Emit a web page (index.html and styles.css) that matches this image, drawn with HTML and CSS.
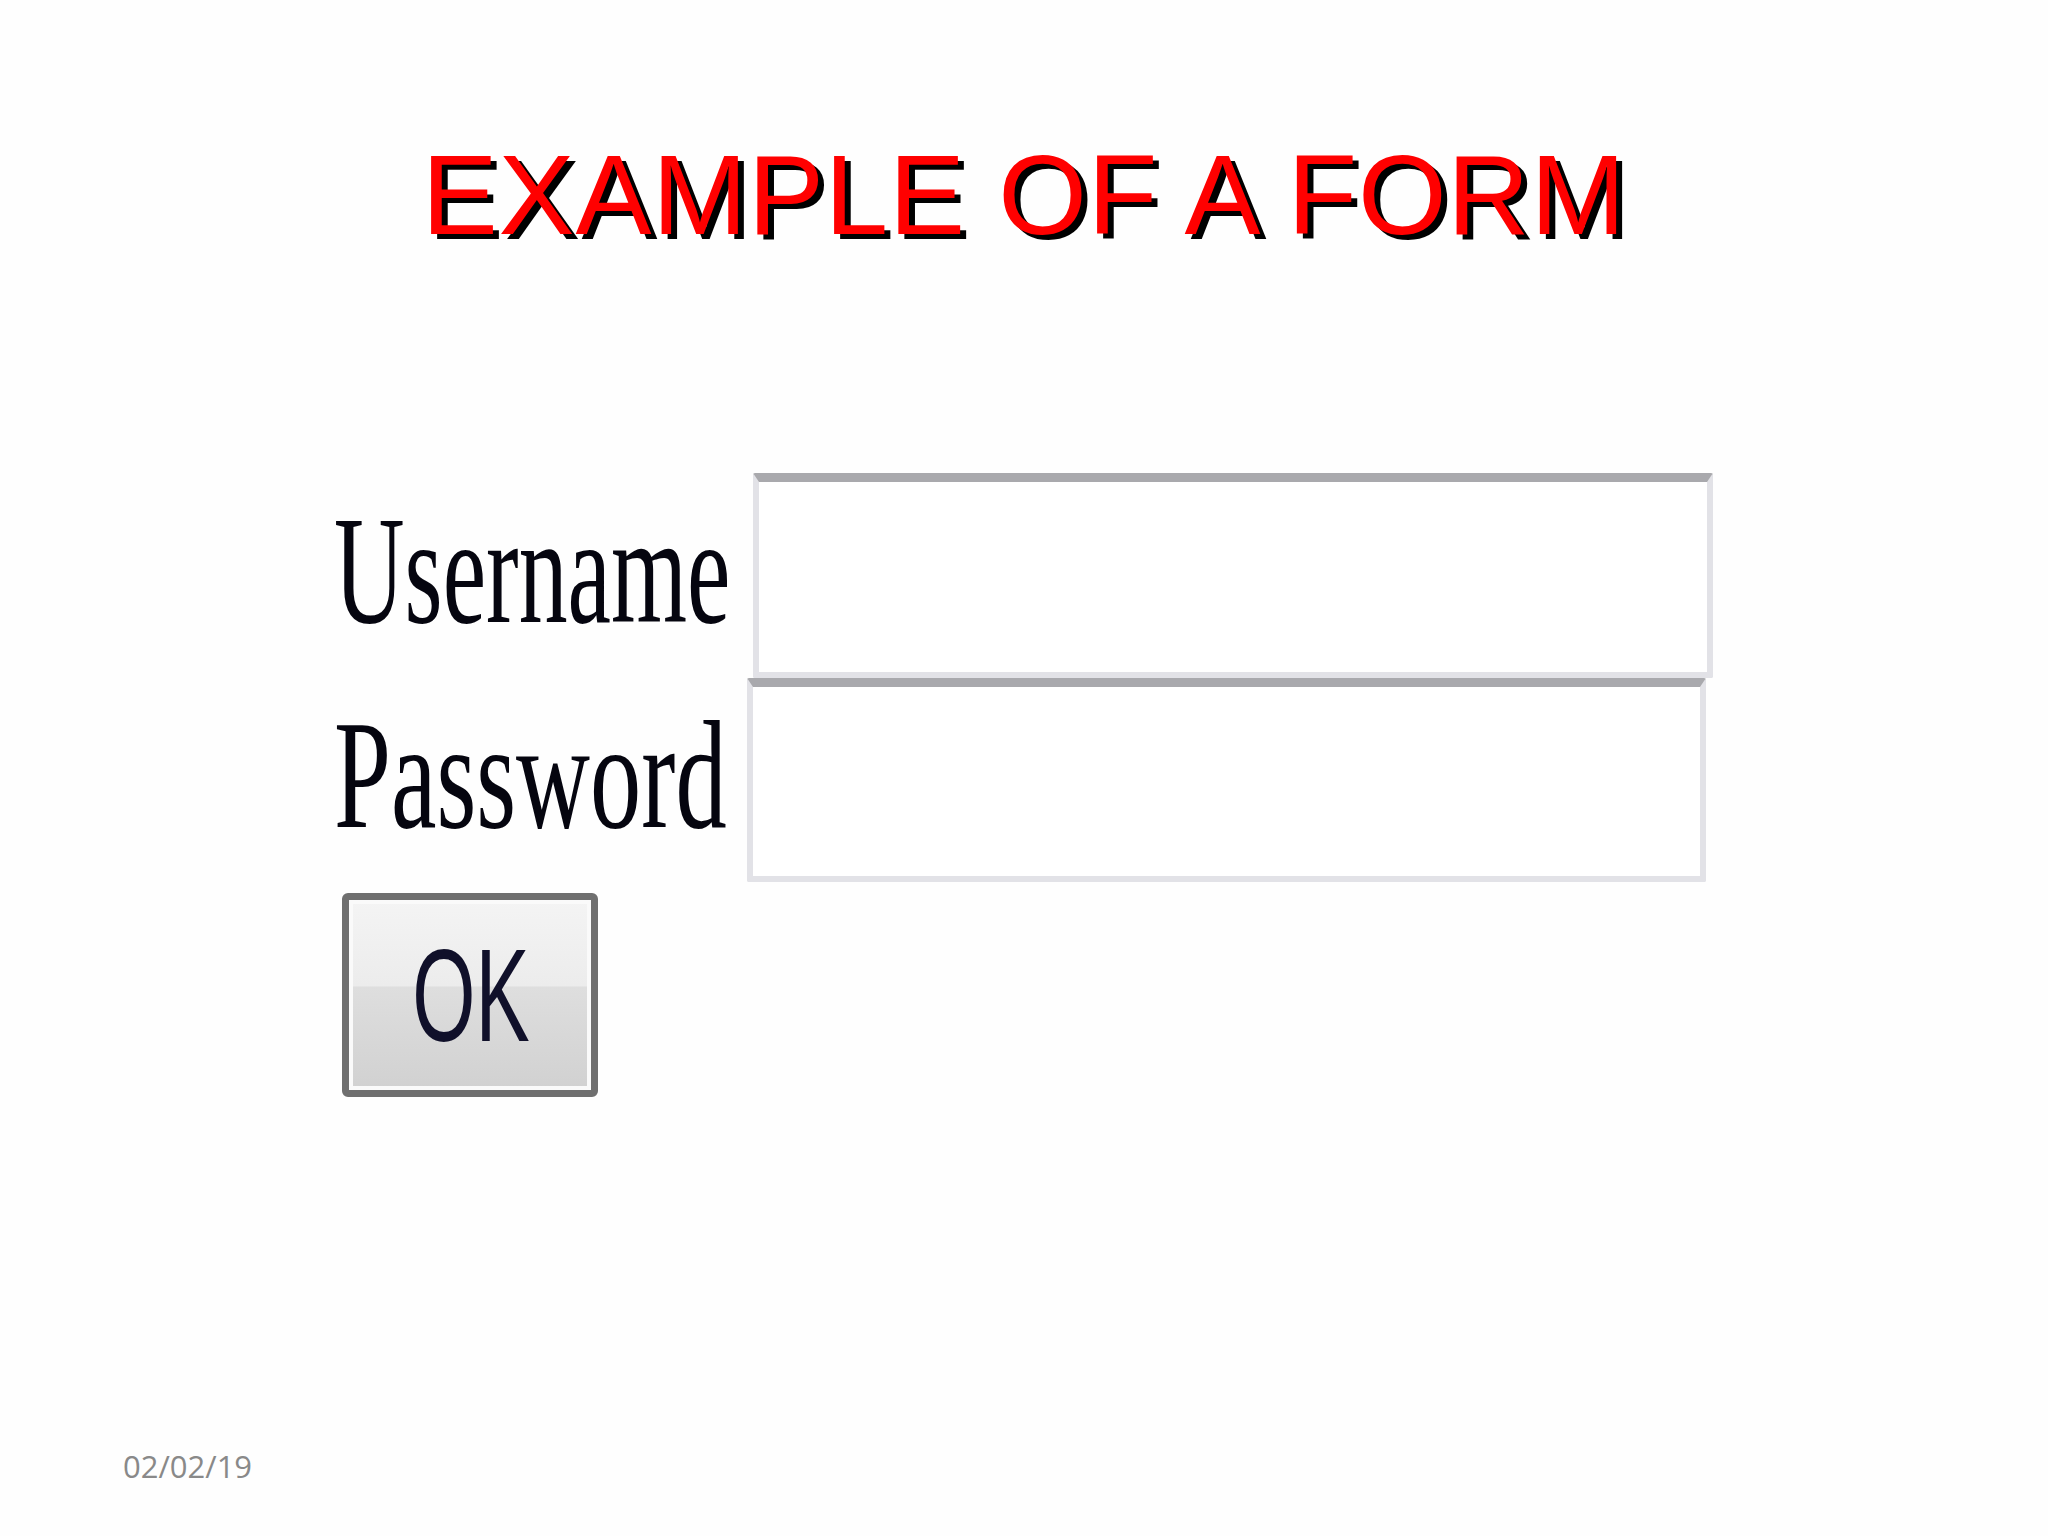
FILE: index.html
```html
<!DOCTYPE html>
<html lang="en">
<head>
<meta charset="utf-8">
<title>Example of a form</title>
<link rel="stylesheet" href="styles.css">
</head>
<body>
<main class="slide">
  <h1 class="title">EXAMPLE OF A FORM</h1>
  <form class="form">
    <div class="row">
      <label class="label" for="user"><span class="label-text label-user">Username</span></label>
      <input class="field field-user" id="user" type="text">
    </div>
    <div class="row">
      <label class="label" for="pass"><span class="label-text label-pass">Password</span></label>
      <input class="field" id="pass" type="password">
    </div>
    <button class="ok" type="button"><span class="ok-text">OK</span></button>
  </form>
  <footer class="date">02/02/19</footer>
</main>
</body>
</html>
```

FILE: styles.css
```css
html, body {
  margin: 0;
  padding: 0;
  background: #ffffff;
}

.slide {
  width: 2048px;
  height: 1536px;
  box-sizing: border-box;
  padding-top: 138px;
  padding-bottom: 54px;
  display: flex;
  flex-direction: column;
  background: #fefefe;
}

.title {
  margin: 0;
  font-family: "Liberation Sans", Arial, sans-serif;
  font-weight: 400;
  font-size: 114px;
  line-height: 1;
  letter-spacing: 0.8px;
  text-align: center;
  color: #ff0000;
  text-shadow: 6px 5px 0 #000000;
  white-space: nowrap;
}

.form {
  margin: 221px 0 0 0;
  padding-left: 334px;
  display: flex;
  flex-direction: column;
  align-items: flex-start;
}

.row {
  display: flex;
  align-items: flex-start;
}

.label {
  width: 413px;
  padding-top: 20px;
  font-family: "Liberation Serif", "Times New Roman", serif;
  font-size: 154px;
  line-height: 1;
  color: #05050f;
  white-space: nowrap;
}

.label-text {
  display: inline-block;
  transform-origin: left center;
}

.label-user {
  transform: scaleX(0.635);
}

.label-pass {
  transform: scaleX(0.665);
}

.field {
  box-sizing: border-box;
  width: 959px;
  height: 204px;
  margin: 0;
  padding: 0;
  background: #ffffff;
  border: 6px solid #e2e2e7;
  border-top: 9px solid #a9a9ad;
  border-radius: 2px;
  outline: none;
}

.field-user {
  width: 960px;
  height: 205px;
  margin-left: 6px;
}

.ok {
  box-sizing: border-box;
  width: 256px;
  height: 204px;
  margin: 11px 0 0 8px;
  padding: 0;
  border: 7px solid #6f6f6f;
  border-radius: 6px;
  box-shadow: inset 0 0 0 4px #fafafa;
  background: linear-gradient(#f4f4f4 0%, #ececec 45%, #dedede 46%, #d1d1d1 100%);
  display: flex;
  align-items: center;
  justify-content: center;
  font-family: "Liberation Sans", Tahoma, sans-serif;
  font-size: 131px;
  line-height: 1;
  color: #10102a;
  cursor: pointer;
}

.ok-text {
  display: inline-block;
  transform: scaleX(0.62) translateX(2px);
}

.date {
  margin-top: auto;
  padding-left: 123px;
  font-family: "Open Sans", "Noto Sans", sans-serif;
  font-size: 31px;
  line-height: 1;
  color: #898989;
}
```
